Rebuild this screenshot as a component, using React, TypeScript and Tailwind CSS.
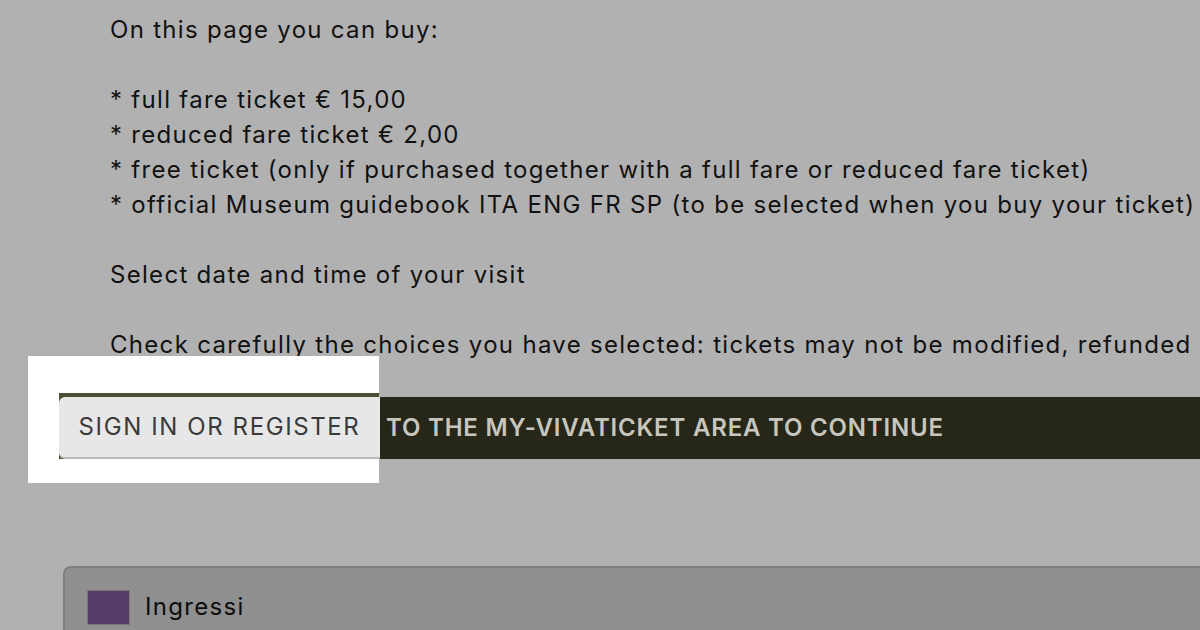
import React from "react";

const lines = [
  "On this page you can buy:",
  "",
  "* full fare ticket € 15,00",
  "* reduced fare ticket € 2,00",
  "* free ticket (only if purchased together with a full fare or reduced fare ticket)",
  "* official Museum guidebook ITA ENG FR SP (to be selected when you buy your ticket)",
  "",
  "Select date and time of your visit",
  "",
  "Check carefully the choices you have selected: tickets may not be modified, refunded or exchanged",
];

const App = () => {
  return (
    <div
      className="w-[1200px] h-[630px] overflow-hidden bg-[#b1b1b1] text-[#111111]"
      style={{ fontFamily: "Inter, 'Noto Sans', sans-serif" }}
    >
      {/* intro text */}
      <div className="pl-[110px] pt-[12px] text-[24px] leading-[35px] tracking-[1.3px] whitespace-nowrap">
        {lines.map((line, i) => (
          <p key={i} className="h-[35px]">
            {line}
          </p>
        ))}
      </div>

      {/* login bar */}
      <div className="relative mt-[35px] ml-[59px] flex h-[62px] items-center bg-[#262619]">
        <div className="absolute left-[-31px] top-[-41px] h-[127px] w-[351px] bg-white" />
        <div className="absolute left-0 top-[-4px] h-[66px] w-[320px] bg-[#4b4f33]" />
        <button className="relative z-10 flex h-[62px] w-[321px] items-center justify-center rounded-l-[6px] border-b-2 border-[#b9b9b9] bg-[#e7e7e7] text-[24px] tracking-[1.6px] text-[#3a3a3a]">
          SIGN IN OR REGISTER
        </button>
        <span className="relative z-10 ml-[6px] text-[24px] font-semibold tracking-[0.8px] text-[#c6c6be]">
          TO THE MY-VIVATICKET AREA TO CONTINUE
        </span>
      </div>

      {/* ticket category card */}
      <div className="mt-[107px] ml-[63px] h-[80px] rounded-tl-[8px] border-t-2 border-l-2 border-[#7f7f7f] bg-[#8f8f8f] pl-[22px] pt-[21px]">
        <div className="flex items-center gap-[15px]">
          <div className="h-[35px] w-[43px] border border-[#777777] bg-[#553c6b]" />
          <span className="text-[24px] tracking-[1.3px] text-[#0c0c0c]">Ingressi</span>
        </div>
      </div>
    </div>
  );
};

export default App;
